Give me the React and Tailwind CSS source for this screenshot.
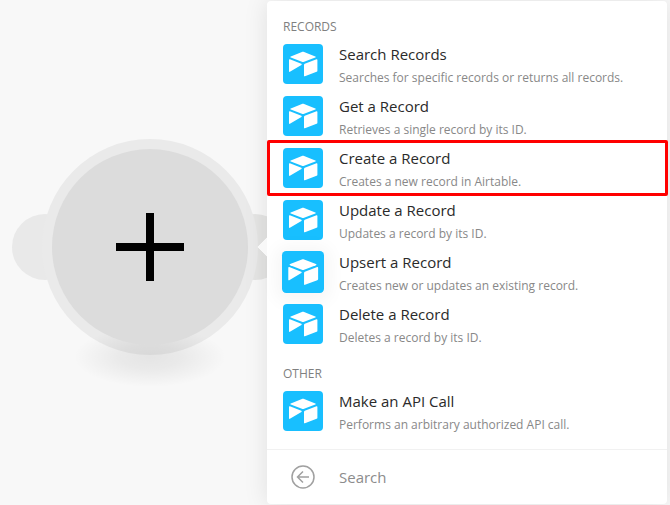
import React, { useState } from "react";

const RECORD_ACTIONS = [
  { id: "search", title: "Search Records", text: "Searches for specific records or returns all records." },
  { id: "get", title: "Get a Record", text: "Retrieves a single record by its ID." },
  { id: "create", title: "Create a Record", text: "Creates a new record in Airtable.", marked: true },
  { id: "update", title: "Update a Record", text: "Updates a record by its ID." },
  { id: "upsert", title: "Upsert a Record", text: "Creates new or updates an existing record.", hovered: true },
  { id: "delete", title: "Delete a Record", text: "Deletes a record by its ID." },
];

const OTHER_ACTIONS = [
  { id: "api", title: "Make an API Call", text: "Performs an arbitrary authorized API call." },
];

const AirtableIcon = ({ hovered }) => (
  <span
    className={`shrink-0 size-10 rounded-sm bg-[#18bfff] ${
      hovered ? "scale-105 shadow-[0_2px_16px_6px_rgba(0,0,0,0.04)]" : ""
    }`}
  >
    <svg viewBox="0 0 40 40" className="size-10" fill="#fff" aria-hidden="true">
      <path d="M18.9 8c.8-.3 1.4-.3 2.2 0l11.2 4.4c.7.3.7.8 0 1.1l-11.2 4.3c-.8.3-1.4.3-2.2 0L7.8 13.5c-.7-.3-.7-.8 0-1.1z" />
      <path d="M6 15.9c0-.5.4-.8.9-.6l11.4 4.5c.6.3.6.8.1 1.1L6.9 27.8c-.5.3-.9.1-.9-.5z" />
      <path d="M21 20.9c0-.6.3-1 .8-1.2l11.7-4.4c.5-.2.9 0 .9.6v10.8c0 .5-.3.9-.8 1.1l-11.7 4.4c-.5.2-.9 0-.9-.5z" />
    </svg>
  </span>
);

// One row of the action list
const ActionRow = ({ action }) => (
  <li>
    <button type="button" className="relative flex w-full h-13 items-center gap-4 px-4 text-left cursor-pointer">
      <AirtableIcon hovered={action.hovered} />
      <span className="min-w-0 flex flex-col gap-0.5 pt-0.5">
        <span className="text-[15px] leading-6 text-[#2a2a2a] truncate">{action.title}</span>
        <span className="text-xs leading-5 text-[#888] truncate">{action.text}</span>
      </span>
      {action.marked && <span className="absolute left-0 -right-px -inset-y-0.5 rounded-xs border-3 border-[#ff0000]" />}
    </button>
  </li>
);

const ActionGroup = ({ title, actions }) => (
  <section>
    <h2 className="flex h-[35px] items-end px-4 pb-px text-xs leading-5 text-[#808080]">{title}</h2>
    <ul>
      {actions.map((action) => (
        <ActionRow key={action.id} action={action} />
      ))}
    </ul>
  </section>
);

// Empty module on the canvas, with a connector ear on each side.
// The ground shadow falls over the outer ring but under the inner disc.
const EmptyModule = () => (
  <div className="relative size-54">
    <div className="absolute top-1/2 -left-[30px] size-[66px] -translate-y-1/2 rounded-full bg-[#e9e9e9]" />
    <div className="absolute top-1/2 -right-[30px] size-[66px] -translate-y-1/2 rounded-full bg-[#e5e5e4]" />
    <button
      type="button"
      aria-label="Add module"
      className="relative flex size-full items-center justify-center rounded-full bg-[#eaeaea] cursor-pointer"
    >
      <span className="absolute left-8 -bottom-8 w-38 h-15 bg-[radial-gradient(closest-side,rgba(0,0,0,0.08),rgba(0,0,0,0.06)_40%,rgba(0,0,0,0.02)_80%,transparent)]" />
      <span className="relative flex size-49 items-center justify-center rounded-full bg-[#dcdcdc]">
        <svg viewBox="0 0 68 68" className="size-17" aria-hidden="true">
          <path d="M34 0v68M0 34h68" stroke="#000" strokeWidth="8" fill="none" />
        </svg>
      </span>
    </button>
  </div>
);

export default function App() {
  const [query, setQuery] = useState("");

  return (
    <div className="flex min-h-screen items-start bg-[#f8f8f8] overflow-hidden font-['Open_Sans',sans-serif]">
      <main className="flex-1 min-w-0 flex pt-[139px] pl-[42px]">
        <div className="shrink-0">
          <EmptyModule />
        </div>
      </main>

      <aside className="relative mt-px mr-[3px] w-[400px] shrink-0 rounded-sm bg-white shadow-[0_0_24px_rgba(0,0,0,0.1)]">
        <span className="absolute top-[239px] -left-[7px] size-3.5 rotate-45 bg-[#f8f8f8] [clip-path:polygon(0_0,0_100%,100%_100%)]" />
        <div className="pt-0.5 pb-3">
          <ActionGroup title="RECORDS" actions={RECORD_ACTIONS} />
          <ActionGroup title="OTHER" actions={OTHER_ACTIONS} />
        </div>
        <div className="flex h-[55px] items-center gap-6 border-t border-[#f1f1f1] px-6">
          <button type="button" aria-label="Back" className="cursor-pointer">
            <svg viewBox="0 0 24 24" className="size-6" fill="none" stroke="#a0a0a0" aria-hidden="true">
              <circle cx="12" cy="12" r="11" strokeWidth="1.5" />
              <path d="M18 12H7M12 6.5L6.5 12l5.5 5.5" strokeWidth="1.5" />
            </svg>
          </button>
          <input
            type="text"
            aria-label="Search"
            placeholder="Search"
            value={query}
            onChange={(e) => setQuery(e.target.value)}
            className="min-w-0 flex-1 bg-transparent text-[15px] leading-6 text-black placeholder:text-[#8c8c8c] outline-none"
          />
        </div>
      </aside>
    </div>
  );
}
